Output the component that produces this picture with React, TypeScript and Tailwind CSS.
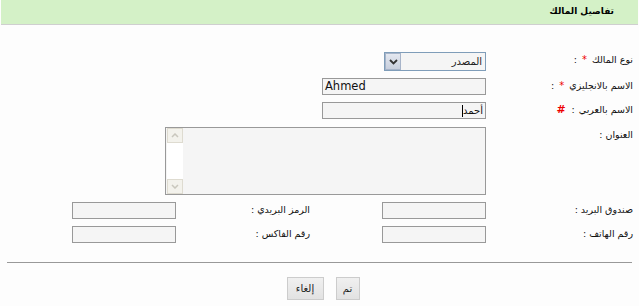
import React from "react";

const font = { fontFamily: '"DejaVu Sans", "Noto Sans", sans-serif' };

function Label({ children, w = "w-[147px]" }: { children: React.ReactNode; w?: string }) {
  return (
    <div className={`${w} shrink-0 flex items-start text-[9.5px] leading-[13px] text-[#111] pt-[1px] whitespace-nowrap`}>
      {children}
    </div>
  );
}

function Input({ w = "w-[164px]", children }: { w?: string; children?: React.ReactNode }) {
  return (
    <div className={`${w} h-[17px] shrink-0 border border-[#999] bg-[#f5f5f5] flex items-center px-[2px] overflow-hidden`}>
      {children}
    </div>
  );
}

export default function App() {
  return (
    <div dir="rtl" className="w-[639px] h-[306px] bg-[#fdfdfd] overflow-hidden" style={font}>
      <div className="mx-px h-[24px] bg-[#d4f1c7] flex items-center pr-[24px] text-[9px] font-bold text-black">
        تفاصيل المالك
      </div>
      <div className="mx-px h-px bg-[#cfcfcf]" />

      <div className="pr-[6px]">
        {/* Row 1 */}
        <div className="flex items-start mt-[27px]">
          <Label>
            <span>نوع المالك</span>
            <span className="text-[#e00] mr-[5px] text-[10px]">*</span>
            <span className="mr-[5px]">:</span>
          </Label>
          <div className="w-[102px] h-[19px] border border-[#7f9db9] bg-[#f5f5f5] flex items-center">
            <span className="flex-1 text-[10px] pr-[3px] text-[#222]">المصدر</span>
            <div className="w-[16px] h-[17px] bg-gradient-to-b from-[#e4e8f0] to-[#c8cfdd] border border-[#a7b4c9] flex items-center justify-center">
              <svg width="9" height="6" viewBox="0 0 9 6">
                <path d="M1 1 L4.5 4.5 L8 1" stroke="#333" strokeWidth="1.8" fill="none" />
              </svg>
            </div>
          </div>
        </div>
        {/* Row 2 */}
        <div className="flex items-start mt-[7px]">
          <Label>
            <span>الاسم بالانجليزي</span>
            <span className="text-[#e00] mr-[5px] text-[10px]">*</span>
            <span className="mr-[5px]">:</span>
          </Label>
          <Input>
            <span dir="ltr" className="w-full text-left text-[11.5px] text-[#111]">Ahmed</span>
          </Input>
        </div>
        {/* Row 3 */}
        <div className="flex items-start mt-[7px]">
          <Label>
            <span>الاسم بالعربي</span>
            <span className="mr-[4px]">:</span>
            <span className="mr-[6px] text-[#e00] font-bold text-[11px] leading-[13px]">#</span>
          </Label>
          <Input>
            <span className="text-[10px] text-[#111]">أحمد</span>
            <span className="w-px h-[12px] bg-black" />
          </Input>
        </div>
        {/* Row 4 textarea */}
        <div className="flex items-start mt-[8px]">
          <Label>
            <span>العنوان</span>
            <span className="mr-[3px]">:</span>
          </Label>
          <div className="w-[321px] h-[68px] border border-[#999] bg-[#f5f5f5] flex justify-end">
            <div className="w-[16px] h-full bg-white flex flex-col justify-between ml-px">
              <div className="h-[15px] border border-[#dedbd0] bg-[#f3f2ec] flex items-center justify-center">
                <svg width="8" height="5" viewBox="0 0 8 5">
                  <path d="M1 4 L4 1 L7 4" stroke="#c9c7bd" strokeWidth="1.5" fill="none" />
                </svg>
              </div>
              <div className="h-[15px] border border-[#dedbd0] bg-[#f3f2ec] flex items-center justify-center">
                <svg width="8" height="5" viewBox="0 0 8 5">
                  <path d="M1 1 L4 4 L7 1" stroke="#c9c7bd" strokeWidth="1.5" fill="none" />
                </svg>
              </div>
            </div>
          </div>
        </div>
        {/* Row 5 */}
        <div className="flex items-start mt-[7px]">
          <Label>
            <span>صندوق البريد</span>
            <span className="mr-[3px]">:</span>
          </Label>
          <Input w="w-[104px]" />
          <div className="w-[72px] shrink-0" />
          <Label w="w-[134px]">
            <span>الرمز البريدي</span>
            <span className="mr-[3px]">:</span>
          </Label>
          <Input w="w-[104px]" />
        </div>
        {/* Row 6 */}
        <div className="flex items-start mt-[7px]">
          <Label>
            <span>رقم الهاتف</span>
            <span className="mr-[3px]">:</span>
          </Label>
          <Input w="w-[104px]" />
          <div className="w-[72px] shrink-0" />
          <Label w="w-[134px]">
            <span>رقم الفاكس</span>
            <span className="mr-[3px]">:</span>
          </Label>
          <Input w="w-[104px]" />
        </div>
      </div>

      <div className="mt-[19px] mr-[7px] ml-[7px] h-px bg-[#999]" />

      <div className="flex justify-center mt-[14px] gap-[12px] pl-[7px]">
        <button className="w-[24px] h-[23px] border border-[#ccc] bg-gradient-to-b from-[#f0f0f0] to-[#e2e2e2] text-[10px] text-[#222] leading-none">
          تم
        </button>
        <button className="w-[37px] h-[23px] border border-[#ccc] bg-gradient-to-b from-[#f0f0f0] to-[#e2e2e2] text-[10px] text-[#222] leading-none">
          إلغاء
        </button>
      </div>
    </div>
  );
}
